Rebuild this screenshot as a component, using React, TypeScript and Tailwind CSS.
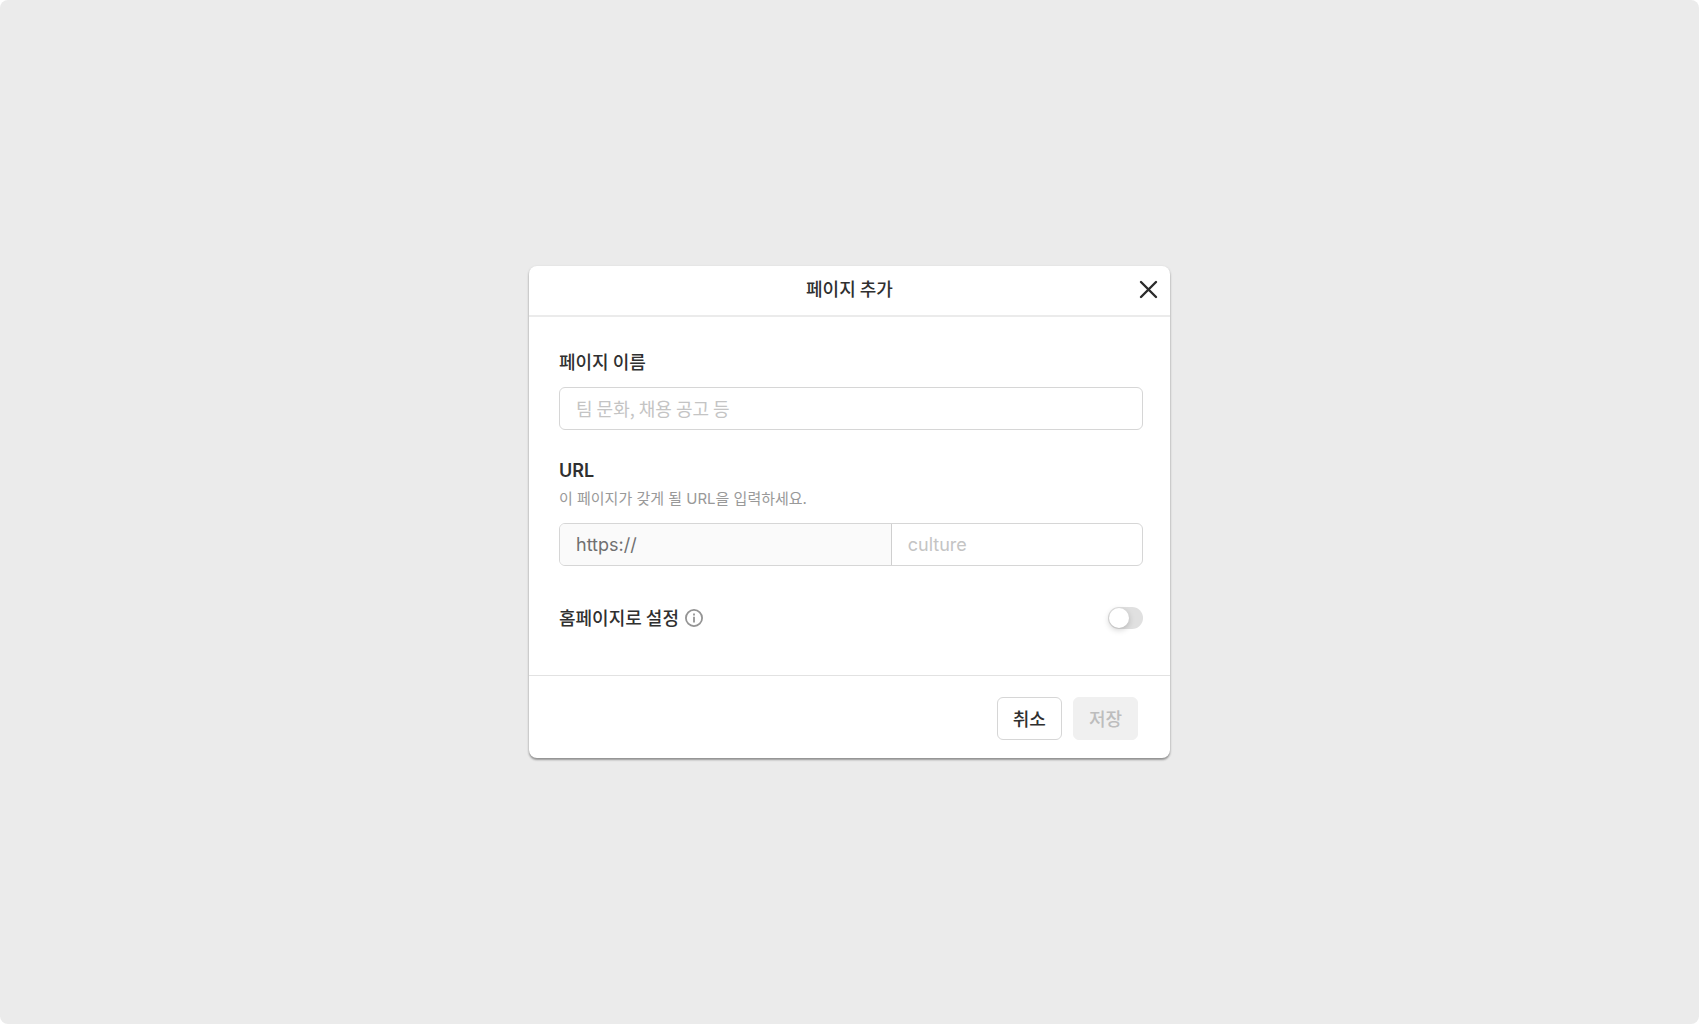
import { useState } from "react";

const labelClass = "block text-lg leading-6 text-[#303030]";

export default function App() {
  const [name, setName] = useState("");
  const [path, setPath] = useState("");
  const [isHome, setIsHome] = useState(false);

  return (
    <div className="min-h-screen bg-white font-['Noto_Sans_CJK_KR',sans-serif]">
      <main className="flex min-h-screen items-center justify-center rounded-lg bg-[#ebebeb]">
        <form
          role="dialog"
          aria-labelledby="dialog-title"
          onSubmit={(e) => e.preventDefault()}
          className="w-full max-w-[641px] rounded-lg bg-white shadow-[0_2px_2px_rgba(0,0,0,0.3),0_1px_3px_rgba(0,0,0,0.16)]"
        >
          <header className="grid grid-cols-[1fr_auto_1fr] items-center border-b-2 border-[#ebebeb] px-2 pt-2.5 pb-[15px]">
            <h1 id="dialog-title" className="col-start-2 text-lg leading-6 font-medium text-[#303030]">
              페이지 추가
            </h1>
            <button type="button" aria-label="닫기" className="justify-self-end text-[#2b2b2b]">
              <svg width="27" height="24" viewBox="0 0 27 24" fill="none" stroke="currentColor" strokeWidth="2.4" strokeLinecap="round">
                <path d="M6 6l15 15M21 6L6 21" />
              </svg>
            </button>
          </header>

          <div className="pt-8 pr-[27px] pb-11 pl-[30px]">
            <label htmlFor="page-name" className={`font-medium ${labelClass}`}>
              페이지 이름
            </label>
            <input
              id="page-name"
              value={name}
              onChange={(e) => setName(e.target.value)}
              placeholder="팀 문화, 채용 공고 등"
              className="mt-3.5 h-[43px] w-full rounded-md border border-[#d6d6d6] px-4 pb-0.5 text-lg text-[#303030] outline-none placeholder:text-[#c4c4c4]"
            />

            <label htmlFor="page-path" className={`mt-[29px] font-[Inter,sans-serif] font-semibold ${labelClass}`}>
              URL
            </label>
            <p className="mt-1.5 font-[Inter,'Noto_Sans_CJK_KR',sans-serif] text-[15px] leading-5 text-[#999999]">
              이 페이지가 갖게 될 URL을 입력하세요.
            </p>
            <div className="mt-3.5 flex h-[43px] overflow-hidden rounded-md border border-[#d6d6d6] font-[Inter,sans-serif] text-lg">
              <span className="flex w-[57%] items-center border-r border-[#cfcfcf] bg-[#fafafa] px-4 pt-px text-[#707070]">
                https://
              </span>
              <input
                id="page-path"
                value={path}
                onChange={(e) => setPath(e.target.value)}
                placeholder="culture"
                className="min-w-0 flex-1 px-4 pt-px text-[#303030] outline-none placeholder:text-[#c4c4c4]"
              />
            </div>

            <div className="mt-[39px] flex items-center justify-between">
              <div className="flex items-center gap-1.5">
                <label htmlFor="home-page" className={`pb-0.5 font-medium ${labelClass}`}>
                  홈페이지로 설정
                </label>
                <svg width="18" height="18" viewBox="0 0 18 18" fill="none" stroke="#949494" strokeWidth="1.8">
                  <circle cx="9" cy="9" r="8.1" />
                  <path d="M9 7.8v5.6M9 4.6v1.9" />
                </svg>
              </div>
              <input
                id="home-page"
                type="checkbox"
                role="switch"
                checked={isHome}
                onChange={(e) => setIsHome(e.target.checked)}
                className="flex h-[22px] w-[35px] appearance-none items-center rounded-full bg-[#e0e0e0] px-px before:size-5 before:rounded-full before:bg-white before:shadow-[0_2px_6px_rgba(0,0,0,0.2)] checked:justify-end checked:bg-[#2b2b2b]"
              />
            </div>
          </div>

          <footer className="flex justify-end gap-[11px] border-t border-[#e2e2e2] pt-[21px] pr-8 pb-[18px]">
            <button type="button" className="h-[43px] rounded-md border border-[#d6d6d6] px-[15px] pb-0.5 text-lg font-medium text-[#303030]">
              취소
            </button>
            <button type="submit" disabled className="h-[43px] rounded-md border border-[#f0f0f0] bg-[#f0f0f0] px-[15px] pb-0.5 text-lg font-medium text-[#bdbdbd]">
              저장
            </button>
          </footer>
        </form>
      </main>
    </div>
  );
}
